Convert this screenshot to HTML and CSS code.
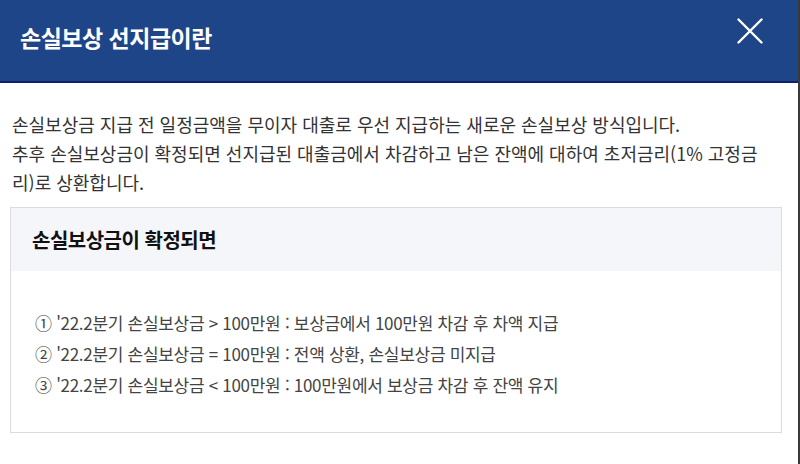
FILE: index.html
```html
<!DOCTYPE html>
<html lang="ko">
<head>
  <meta charset="UTF-8" />
  <meta name="viewport" content="width=device-width, initial-scale=1.0"/>
  <title>손실보상 선지급이란</title>
  <link rel="stylesheet" href="styles.css">
</head>
<body>
  <div class="popup">
    <!-- 팝업 상단 -->
    <div class="popup-head">
      <h1>손실보상 선지급이란</h1>
      <button class="close-btn" aria-label="닫기">
        <svg width="26" height="26" viewBox="0 0 26 26">
          <path d="M1.5 1.5 L24.5 24.5 M24.5 1.5 L1.5 24.5" stroke="#fff" stroke-width="2.4" stroke-linecap="round" fill="none"/>
        </svg>
      </button>
    </div>

    <div class="popup-body">
      <p class="desc">손실보상금 지급 전 일정금액을 무이자 대출로 우선 지급하는 새로운 손실보상 방식입니다.<br>추후 손실보상금이 확정되면 선지급된 대출금에서 차감하고 남은 잔액에 대하여 초저금리(1% 고정금리)로 상환합니다.</p>

      <!-- 확정 후 처리 안내 -->
      <div class="info-box">
        <div class="info-title">손실보상금이 확정되면</div>
        <ul class="info-list">
          <li>① '22.2분기 손실보상금 &gt; 100만원 : 보상금에서 100만원 차감 후 차액 지급</li>
          <li>② '22.2분기 손실보상금 = 100만원 : 전액 상환, 손실보상금 미지급</li>
          <li>③ '22.2분기 손실보상금 &lt; 100만원 : 100만원에서 보상금 차감 후 잔액 유지</li>
        </ul>
      </div>
    </div>
  </div>
</body>
</html>
```

FILE: styles.css
```css
body {
  margin: 0;
  font-family: "Noto Sans CJK KR", "Noto Sans", sans-serif;
  background: #fff;
  color: #333;
}
.popup {
  width: 800px;
  height: 464px;
  box-sizing: border-box;
  border-right: 2px solid #3a3a3a;
}
/* 상단 타이틀 바 */
.popup-head {
  height: 83px;
  background: #1f4589;
  border-bottom: 2px solid #0f1f6e;
  display: flex;
  align-items: flex-start;
  justify-content: space-between;
  padding: 0 35px 0 20px;
  box-sizing: border-box;
}
.popup-head h1 {
  margin: 21px 0 0;
  color: #fff;
  font-size: 23px;
  line-height: 32px;
  font-weight: bold;
  letter-spacing: -0.5px;
}
.close-btn {
  background: none;
  border: none;
  padding: 0;
  margin-top: 18px;
  width: 26px;
  height: 26px;
  cursor: pointer;
}
.popup-body {
  padding: 27px 16px 0 10px;
}
.desc {
  width: 762px;
  margin: 0 0 10px 2px;
  font-size: 18px;
  line-height: 29px;
  color: #333;
  word-break: break-all;
}
.info-box {
  border: 1px solid #dcdcdc;
  width: 772px;
  box-sizing: border-box;
}
.info-title {
  background: #f5f6fa;
  height: 63px;
  line-height: 63px;
  padding-left: 21px;
  font-size: 20px;
  font-weight: bold;
  letter-spacing: -0.5px;
  color: #111;
}
.info-list {
  list-style: none;
  margin: 0;
  padding: 36px 0 32px 24px;
}
.info-list li {
  font-size: 17px;
  line-height: 31px;
  letter-spacing: -0.3px;
  color: #444;
}
```
